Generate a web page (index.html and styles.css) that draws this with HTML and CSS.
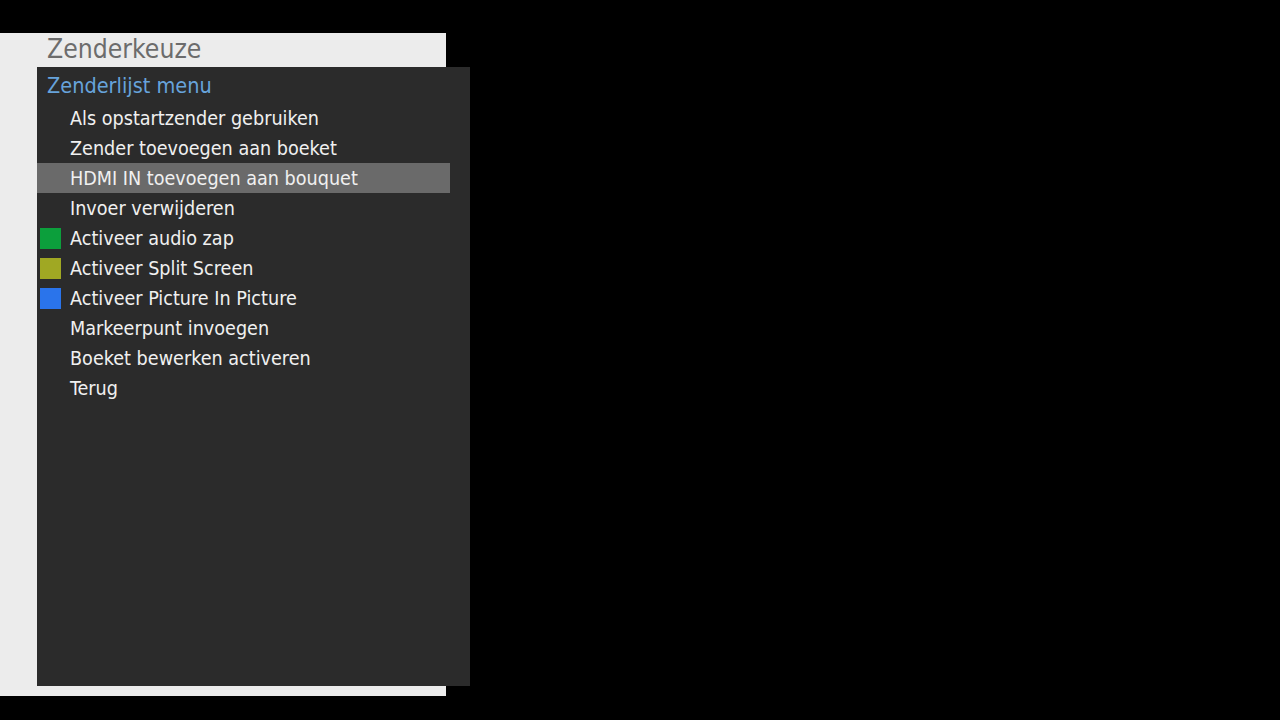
FILE: index.html
```html
<!DOCTYPE html>
<html>
<head>
<meta charset="utf-8">
<link rel="stylesheet" href="styles.css">
</head>
<body>
<div class="screen">
  <div class="title">Zenderkeuze</div>
  <div class="menu">
    <div class="menu-title">Zenderlijst menu</div>
    <ul class="list">
      <li class="item"><span class="key"></span><span class="label">Als opstartzender gebruiken</span></li>
      <li class="item"><span class="key"></span><span class="label">Zender toevoegen aan boeket</span></li>
      <li class="item selected"><span class="key"></span><span class="label">HDMI IN toevoegen aan bouquet</span></li>
      <li class="item"><span class="key"></span><span class="label">Invoer verwijderen</span></li>
      <li class="item"><span class="key green"></span><span class="label">Activeer audio zap</span></li>
      <li class="item"><span class="key yellow"></span><span class="label">Activeer Split Screen</span></li>
      <li class="item"><span class="key blue"></span><span class="label">Activeer Picture In Picture</span></li>
      <li class="item"><span class="key"></span><span class="label">Markeerpunt invoegen</span></li>
      <li class="item"><span class="key"></span><span class="label">Boeket bewerken activeren</span></li>
      <li class="item"><span class="key"></span><span class="label">Terug</span></li>
    </ul>
  </div>
</div>
</body>
</html>
```
FILE: styles.css
```css
html, body {
  margin: 0;
  padding: 0;
  background: #000;
  width: 1280px;
  height: 720px;
  overflow: hidden;
  font-family: "DejaVu Sans Condensed", "DejaVu Sans", "Liberation Sans", sans-serif;
  font-stretch: condensed;
}
body {
  padding-top: 33px;
  box-sizing: border-box;
}
.screen {
  width: 446px;
  height: 663px;
  background: #ececec;
  display: flex;
  flex-direction: column;
}
.title {
  height: 34px;
  line-height: 33px;
  padding-left: 47px;
  font-size: 26.3px;
  color: #6c6c6c;
}
.menu {
  margin-left: 37px;
  width: 433px;
  height: 619px;
  background: #2b2b2b;
  flex: none;
}
.menu-title {
  height: 36px;
  line-height: 38px;
  padding-left: 10px;
  font-size: 21.5px;
  color: #67a3db;
}
.list {
  list-style: none;
  margin: 0;
  padding: 0;
  width: 413px;
}
.item {
  height: 30px;
  display: flex;
  align-items: center;
  color: #f0f0f0;
  font-size: 19.6px;
}
.item.selected {
  background: #6a6a6a;
}
.key {
  width: 21px;
  height: 21px;
  margin-left: 3px;
  margin-right: 9px;
  flex: none;
}
.key.green { background: #0c9f3c; }
.key.yellow { background: #a0a823; }
.key.blue { background: #2a74eb; }
.label {
  line-height: 30px;
  padding-top: 2px;
  white-space: nowrap;
}
```
